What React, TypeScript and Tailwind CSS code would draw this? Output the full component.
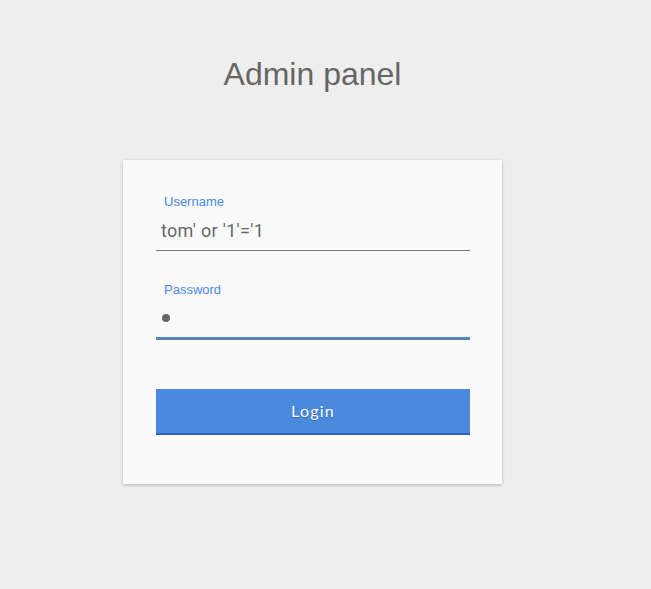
import React from "react";

export default function App() {
  return (
    <div className="min-h-[589px] w-full bg-[#eeeeee]" style={{ fontFamily: '"Liberation Sans", Arial, sans-serif' }}>
      <div className="w-[625px] flex flex-col items-center">
        <h1 className="mt-[54px] text-[32px] leading-[40px] text-[#666666] font-normal">Admin panel</h1>
        <div className="mt-[66px] w-[379px] h-[324px] bg-[#fafafa] shadow-[0_1px_3px_rgba(0,0,0,0.25)] pl-[33px] pr-[32px] pt-[34px]">
          <div className="text-[13px] leading-[16px] text-[#4a89dc] pl-[8px]">Username</div>
          <div
            className="mt-[3px] h-[38px] border-b border-[#777777] flex items-center pl-[5px] pb-[3px] text-[18px] tracking-[0.3px] text-[#666666]"
            style={{ fontFamily: 'Roboto, "Liberation Sans", sans-serif' }}
          >
            tom' or '1'='1
          </div>
          <div className="mt-[31px] text-[13px] leading-[16px] text-[#4a89dc] pl-[8px]">Password</div>
          <div className="mt-[3px] h-[38px] border-b-2 border-[#4a89dc] shadow-[0_1px_0_#777777] flex items-center pl-[6px] pb-[2px]">
            <span className="inline-block w-[8px] h-[8px] rounded-full bg-[#666666]" />
          </div>
          <button
            className="mt-[50px] w-full h-[46px] bg-[#4a89dc] border-b-2 border-[#2e62bd] text-white text-[16px] tracking-[1.2px] flex items-center justify-center"
            style={{ fontFamily: 'Lato, "Liberation Sans", sans-serif', textShadow: "0 1px 1px rgba(0,0,0,0.25)" }}
          >
            Login
          </button>
        </div>
      </div>
    </div>
  );
}
